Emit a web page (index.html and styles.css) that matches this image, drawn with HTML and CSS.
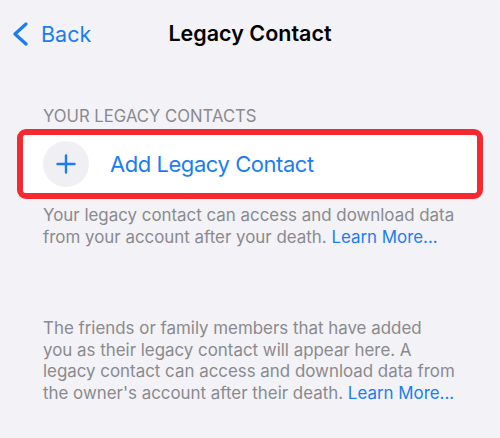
FILE: index.html
```html
<!DOCTYPE html>
<html lang="en">
<head>
<meta charset="utf-8">
<title>Legacy Contact</title>
<link rel="stylesheet" href="styles.css">
</head>
<body>
<div class="screen">
  <header class="nav">
    <a class="back" href="#">
      <svg class="chevron" width="18" height="24" viewBox="0 0 18 24"><polyline points="15,2 4,12 15,22" fill="none" stroke="#1a7ef2" stroke-width="3.2" stroke-linecap="round" stroke-linejoin="round"/></svg>
      <span class="back-label">Back</span>
    </a>
    <h1 class="title">Legacy Contact</h1>
  </header>

  <section class="group">
    <div class="group-header">YOUR LEGACY CONTACTS</div>
    <div class="highlight">
      <div class="cell">
        <span class="plus-circle">
          <svg width="20" height="20" viewBox="0 0 20 20"><path d="M10 1.5V18.5M1.5 10H18.5" stroke="#1a7ef2" stroke-width="2.4" stroke-linecap="round"/></svg>
        </span>
        <span class="cell-label">Add Legacy Contact</span>
      </div>
    </div>
    <p class="footer">Your legacy contact can access and download data<br>from your account after your death. <a href="#" class="link">Learn More...</a></p>
  </section>

  <section class="group second">
    <p class="footer">The friends or family members that have added<br>you as their legacy contact will appear here. A<br>legacy contact can access and download data from<br>the owner's account after their death. <a href="#" class="link">Learn More...</a></p>
  </section>
</div>
</body>
</html>
```

FILE: styles.css
```css
html, body {
  margin: 0;
  padding: 0;
  background: #f2f2f7;
}

.screen {
  width: 500px;
  height: 438px;
  overflow: hidden;
  font-family: Inter, "Liberation Sans", sans-serif;
  background: #f2f2f7;
}

.nav {
  position: relative;
  height: 66px;
  display: flex;
  align-items: center;
  justify-content: center;
}

.back {
  position: absolute;
  left: 11px;
  top: 22px;
  display: flex;
  align-items: center;
  gap: 12px;
  color: #1a7ef2;
  text-decoration: none;
}

.chevron {
  display: block;
}

.back-label {
  font-size: 21.5px;
  line-height: 24px;
}

.title {
  margin: 0;
  font-size: 21.5px;
  font-weight: 600;
  color: #000;
  line-height: 24px;
}

.group {
  display: flex;
  flex-direction: column;
}

.group-header {
  padding: 40px 0 0 43px;
  font-size: 16.7px;
  line-height: 20px;
  color: #8a8a8e;
}

.highlight {
  margin: 3px 17px 0 17px;
  border: 6px solid #f52a30;
  border-radius: 9px;
}

.cell {
  background: #fff;
  height: 58px;
  border-radius: 3px;
  display: flex;
  align-items: center;
  padding-left: 20px;
  gap: 21px;
}

.plus-circle {
  width: 46px;
  height: 46px;
  border-radius: 50%;
  background: #efeff4;
  display: flex;
  align-items: center;
  justify-content: center;
}

.cell-label {
  font-size: 22px;
  letter-spacing: -0.45px;
  color: #1a7ef2;
}

.footer {
  margin: 6px 0 0 43px;
  width: 440px;
  font-size: 16.9px;
  line-height: 21.5px;
  color: #8a8a8e;
  white-space: nowrap;
}

.link {
  color: #1a7ef2;
  text-decoration: none;
}

.second .footer {
  margin-top: 70px;
}
```
